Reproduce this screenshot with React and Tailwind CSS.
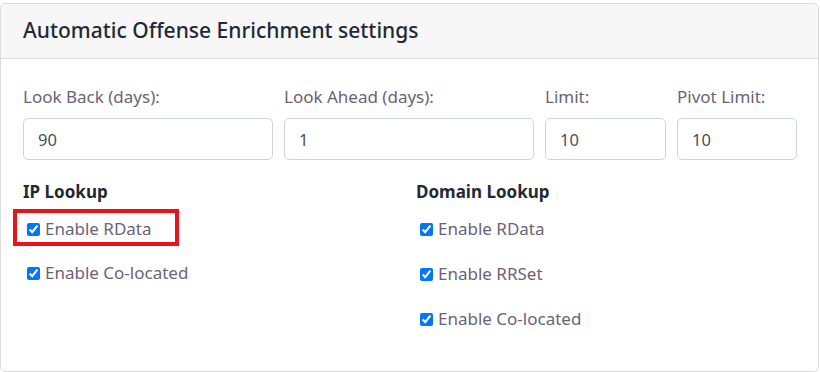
import React from "react";

const font = { fontFamily: '"Noto Sans", "Open Sans", sans-serif' };

function Field({ label, value }) {
  return (
    <div className="flex flex-col">
      <label className="text-[17px] leading-6 text-[#6a6378]">{label}</label>
      <input
        readOnly
        value={value}
        className="mt-[9px] h-[42px] w-full rounded-[5px] border border-[#ced4da] bg-white px-[14px] text-[16.5px] text-[#495057] outline-none"
      />
    </div>
  );
}

function Check({ label, boxed }) {
  return (
    <div className="relative flex h-6 items-center">
      {boxed && (
        <div className="pointer-events-none absolute left-[-10px] top-[-8px] h-[37px] w-[166px] border-4 border-[#e8141c]" />
      )}
      <input
        type="checkbox"
        defaultChecked
        className="ml-[4px] h-[13px] w-[13px] accent-[#0075ff]"
      />
      <span className="ml-[5px] text-[17px] leading-6 text-[#6a6378]">{label}</span>
    </div>
  );
}

export default function App() {
  return (
    <div className="min-h-screen bg-white pt-[3px]" style={font}>
      <div className="w-[819px] rounded-[5px] border border-[#dcdcdc]">
        {/* Header */}
        <div className="flex h-[55px] items-center rounded-t-[5px] border-b border-[#dcdcdc] bg-[#f7f7f7] px-[22px]">
          <h2 className="text-[21px] font-medium text-[#1f2a37]">Automatic Offense Enrichment settings</h2>
        </div>

        {/* Body */}
        <div className="px-[22px] pb-[40px] pt-[26px]">
          <div className="grid grid-cols-[250px_250px_121px_120px] gap-x-[11px]">
            <Field label="Look Back (days):" value="90" />
            <Field label="Look Ahead (days):" value="1" />
            <Field label="Limit:" value="10" />
            <Field label="Pivot Limit:" value="10" />
          </div>

          <div className="mt-[20px] grid grid-cols-[393px_1fr]">
            <div>
              <h3 className="text-[17px] font-bold leading-6 text-[#1f2a37]">IP Lookup</h3>
              <div className="mt-[13px] flex flex-col gap-[20px]">
                <Check label="Enable RData" boxed />
                <Check label="Enable Co-located" />
              </div>
            </div>
            <div>
              <h3 className="text-[17px] font-bold leading-6 text-[#1f2a37]">Domain Lookup</h3>
              <div className="mt-[13px] flex flex-col gap-[21px]">
                <Check label="Enable RData" />
                <Check label="Enable RRSet" />
                <Check label="Enable Co-located" />
              </div>
            </div>
          </div>
        </div>
      </div>
    </div>
  );
}
